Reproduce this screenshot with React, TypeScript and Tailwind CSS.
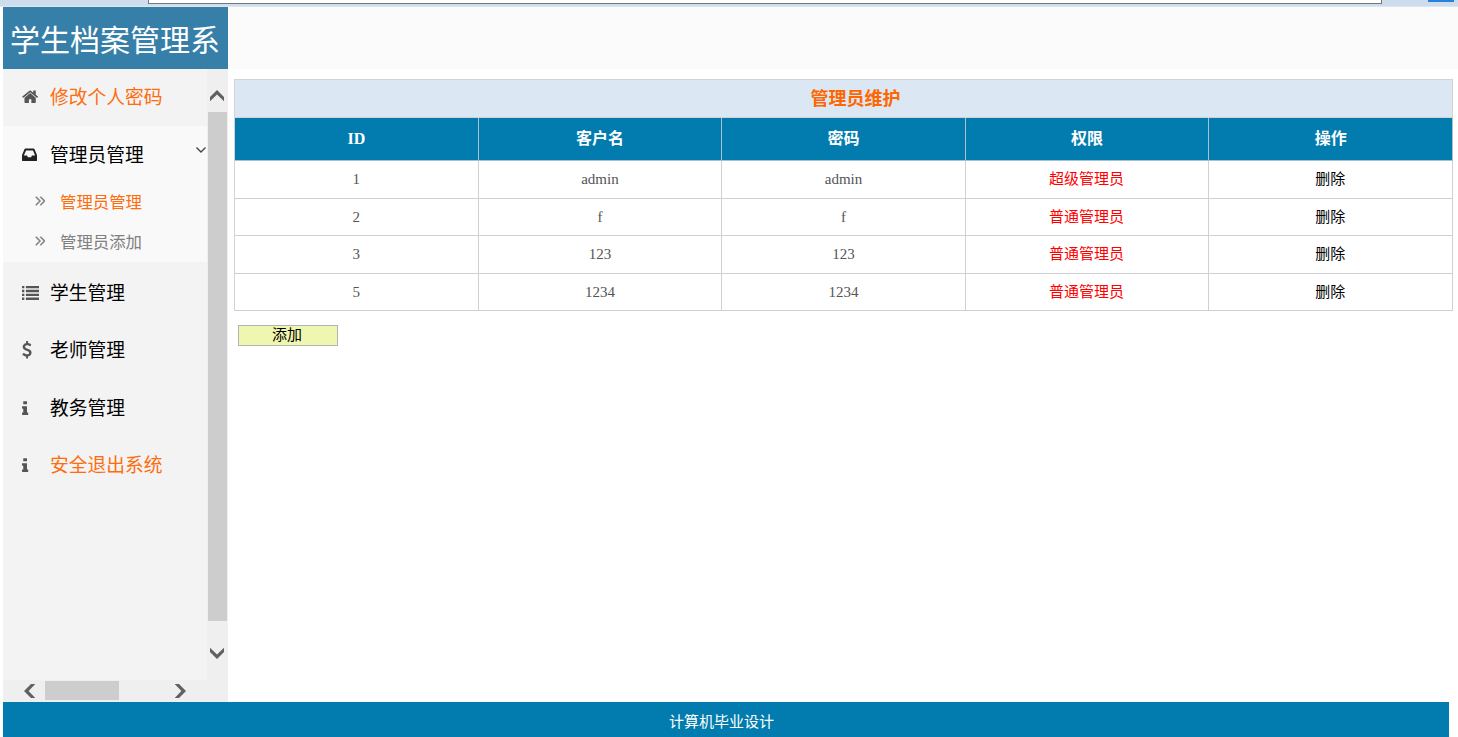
import React from 'react'
import clsx from 'clsx'

type IconProps = { className?: string }

const HomeIcon = ({ className }: IconProps) => (
    <svg viewBox="0 0 1792 1792" className={className} fill="currentColor">
        <path d="M1408 992v480q0 26-19 45t-45 19h-384v-384h-256v384h-384q-26 0-45-19t-19-45v-480q0-1 .5-3t.5-3l575-474 575 474q1 2 1 6zm223-69l-62 74q-8 9-21 11h-3q-13 0-21-7l-692-577-692 577q-12 8-24 7-13-2-21-11l-62-74q-8-10-7-23.5t11-21.5l719-599q32-26 76-26t76 26l244 204v-195q0-14 9-23t23-9h192q14 0 23 9t9 23v408l219 182q10 8 11 21.5t-7 23.5z" />
    </svg>
)

const InboxIcon = ({ className }: IconProps) => (
    <svg viewBox="0 0 1792 1792" className={className} fill="currentColor">
        <path d="M1023 960h316q-1-3-2.5-8t-2.5-8l-212-496h-708l-212 496q-1 2-2.5 8t-2.5 8h316l95 192h320zm513 30v482q0 26-19 45t-45 19h-1408q-26 0-45-19t-19-45v-482q0-62 25-123l238-552q10-25 36.5-42t52.5-17h832q26 0 52.5 17t36.5 42l238 552q25 61 25 123z" />
    </svg>
)

const ListIcon = ({ className }: IconProps) => (
    <svg viewBox="0 0 18 18" className={className} fill="currentColor">
        <path d="M0 2h2.4v2.4H0zM4 2h14v2.4H4zM0 6h2.4v2.4H0zM4 6h14v2.4H4zM0 10h2.4v2.4H0zM4 10h14v2.4H4zM0 14h2.4v2.4H0zM4 14h14v2.4H4z" />
    </svg>
)

const DollarIcon = ({ className }: IconProps) => (
    <svg viewBox="0 0 1792 1792" className={className} fill="currentColor">
        <path d="M978 1185q0 153-99.5 263.5t-258.5 136.5v175q0 14-9 23t-23 9h-135q-13 0-22.5-9.5t-9.5-22.5v-175q-66-9-127.5-31t-101.5-44.5-74-48-46.5-37.5-17.5-18q-17-21-2-41l103-135q7-10 23-12 15-2 24 9l2 2q113 99 243 125 37 8 74 8 81 0 142.5-43t61.5-122q0-28-15-53t-33.5-42-58.5-37.5-66-32-80-32.5q-39-16-61.5-25t-61.5-26.5-62.5-31-56.5-35.5-53.5-42.5-43.5-49-35.5-58-21-66.5-8.5-78q0-138 98-242t255-134v-180q0-13 9.5-22.5t22.5-9.5h135q14 0 23 9t9 23v176q57 6 110.5 23t87 33.5 63.5 37.5 39 29 15 14q17 18 5 38l-81 146q-8 15-23 16-14 3-27-7-3-3-14.5-12t-39-26.5-58.5-32-74.5-26-85.5-11.5q-95 0-155 43t-60 111q0 26 8.5 48t29.5 41.5 39.5 33 56 31 60.5 27 70 27.5q53 20 81 31.5t76 35 75.5 42.5 62 50 53 63.5 31.5 76.5 13 94z" />
    </svg>
)

const InfoIcon = ({ className }: IconProps) => (
    <svg viewBox="0 -96 1792 1792" className={className} fill="currentColor">
        <path d="M640 1344v128q0 26-19 45t-45 19h-512q-26 0-45-19t-19-45v-128q0-26 19-45t45-19h64v-384h-64q-26 0-45-19t-19-45v-128q0-26 19-45t45-19h384q26 0 45 19t19 45v576h64q26 0 45 19t19 45zm-128-1152v192q0 26-19 45t-45 19h-256q-26 0-45-19t-19-45v-192q0-26 19-45t45-19h256q26 0 45 19t19 45z" />
    </svg>
)

const DoubleAngle = () => (
    <svg viewBox="0 0 10 10" className="size-[10px] text-[#858585]" fill="none" stroke="currentColor" strokeWidth="1.6">
        <path d="M.8.8 5 5 .8 9.2M5.3.8 9.5 5 5.3 9.2" />
    </svg>
)

// points up by default, rotated for the other scroll buttons
const ScrollArrow = ({ className }: IconProps) => (
    <svg viewBox="0 0 14 12" className={clsx('h-3 w-[14px] shrink-0', className)} fill="#606060">
        <path d="M7 0l7 7v4.3L7 4.6 0 11.3V7z" />
    </svg>
)

const menu = [
    { label: '学生管理', Icon: ListIcon },
    { label: '老师管理', Icon: DollarIcon },
    { label: '教务管理', Icon: InfoIcon },
    { label: '安全退出系统', Icon: InfoIcon, active: true },
]

const subMenu = [
    { label: '管理员管理', active: true },
    { label: '管理员添加', active: false },
]

const columns = ['ID', '客户名', '密码', '权限', '操作']

const admins = [
    { id: 1, name: 'admin', password: 'admin', role: '超级管理员' },
    { id: 2, name: 'f', password: 'f', role: '普通管理员' },
    { id: 3, name: '123', password: '123', role: '普通管理员' },
    { id: 5, name: '1234', password: '1234', role: '普通管理员' },
]

type MenuItemProps = {
    label: string
    Icon: React.ComponentType<IconProps>
    active?: boolean
    open?: boolean
}

const MenuItem = ({ label, Icon, active, open }: MenuItemProps) => (
    <div className="flex h-[57.5px] items-center pl-[18.5px]">
        <Icon className={clsx('size-[17.5px] shrink-0', open ? 'text-[#222]' : 'text-[#555]')} />
        <span className={clsx('-mt-px ml-[11px] text-[18.75px]', active ? 'text-[#ff6c0c]' : 'text-black')}>{label}</span>
        {open && (
            <svg viewBox="0 0 10 6" className="mr-[1px] mb-2 ml-auto h-[6px] w-[10px]" fill="none" stroke="#444" strokeWidth="1.4">
                <path d="M.5.5 5 5 9.5.5" />
            </svg>
        )}
    </div>
)

const Sidebar = () => (
    <aside className="flex w-[225px] shrink-0 flex-col">
        <div className="flex h-[62px] items-center overflow-hidden bg-[#367fa9] pl-[7px] text-[30px] whitespace-nowrap text-white">
            <span>学生档案管理系</span>
        </div>
        <div className="flex h-[611px]">
            <nav className="w-[204px] bg-[#f3f3f3]">
                <div className="-mt-px">
                    <MenuItem label="修改个人密码" Icon={HomeIcon} active />
                </div>
                <div className="h-[136px] bg-[#f9f9f9]">
                    <MenuItem label="管理员管理" Icon={InboxIcon} open />
                    {subMenu.map((item) => (
                        <div key={item.label} className="flex h-10 items-center pb-[4px] pl-8">
                            <DoubleAngle />
                            <span className={clsx('ml-[15px] text-[16.4px]', item.active ? 'text-[#ff6c0c]' : 'text-[#808080]')}>
                                {item.label}
                            </span>
                        </div>
                    ))}
                </div>
                <div className="pt-[2px]">
                    {menu.map((item) => (
                        <MenuItem key={item.label} {...item} />
                    ))}
                </div>
            </nav>
            <div className="flex w-[21px] flex-col items-center bg-[#efefef]">
                <ScrollArrow className="mt-[21px] mr-px mb-[10px]" />
                <div className="h-[509px] w-[19px] bg-[#cdcdcd]" />
                <ScrollArrow className="mt-[26px] mr-px rotate-180" />
            </div>
        </div>
        <div className="flex h-[22px] items-center bg-[#efefef] pb-px">
            <ScrollArrow className="ml-[20px] -rotate-90" />
            <div className="ml-[8px] h-[19px] w-[74px] bg-[#cdcdcd]" />
            <ScrollArrow className="ml-[54px] rotate-90" />
        </div>
    </aside>
)

const AdminTable = () => (
    <div className="mr-[5px] ml-[6px] border-t border-l border-[#d3d3d3] text-center text-[15px] leading-[18px]">
        <div className="flex h-[38px] items-center justify-center border-r border-b border-[#d3d3d3] bg-[#dbe7f3] pl-[24px] text-lg font-bold text-[#ff6600]">
            管理员维护
        </div>
        <div className="grid h-[43px] grid-cols-5 bg-[#027cae] text-base font-bold text-white">
            {columns.map((column) => (
                <div key={column} className="flex items-center justify-center border-r border-b border-[#a9c1cd]">
                    {column}
                </div>
            ))}
        </div>
        {admins.map((admin) => (
            <div key={admin.id} className="grid h-[37.5px] grid-cols-5 text-[#555] *:flex *:items-center *:justify-center *:border-r *:border-b *:border-[#d0d0d0]">
                <div>{admin.id}</div>
                <div>{admin.name}</div>
                <div>{admin.password}</div>
                <div className="pr-px text-[#ff0000]">{admin.role}</div>
                <div className="pr-px text-black">删除</div>
            </div>
        ))}
    </div>
)

const App = () => {
    return (
        <div className="flex h-[737px] w-[1458px] flex-col overflow-hidden bg-white font-['Noto_Sans_CJK_SC',sans-serif]">
            <div className="flex h-[7px] shrink-0 items-start justify-between border-b border-[#dde7f2] bg-[#cddded]">
                <div className="ml-[148px] h-[4px] w-[1234px] border-x border-b border-[#777] bg-white" />
                <div className="mr-[4px] h-[2px] w-[26px] bg-[#2680dc]" />
            </div>
            <div className="flex h-[695px] shrink-0 pl-[3px]">
                <Sidebar />
                <main className="flex-1 font-['Liberation_Serif','Noto_Sans_CJK_SC',serif]">
                    <div className="mb-[10px] h-[62px] bg-[#fbfbfb]" />
                    <AdminTable />
                    <button className="mt-[14px] ml-[10px] flex h-[21px] w-[100px] items-center justify-center border border-[#b3b3b3] bg-[#eff6b0] pr-[2px] text-[15px] leading-none text-black">
                        添加
                    </button>
                </main>
            </div>
            <footer className="mr-[9px] ml-[3px] flex h-[35px] shrink-0 items-center justify-center bg-[#027cae] pt-[3px] pr-[9px] text-[15px] text-white">
                计算机毕业设计
            </footer>
        </div>
    )
}

export default App
